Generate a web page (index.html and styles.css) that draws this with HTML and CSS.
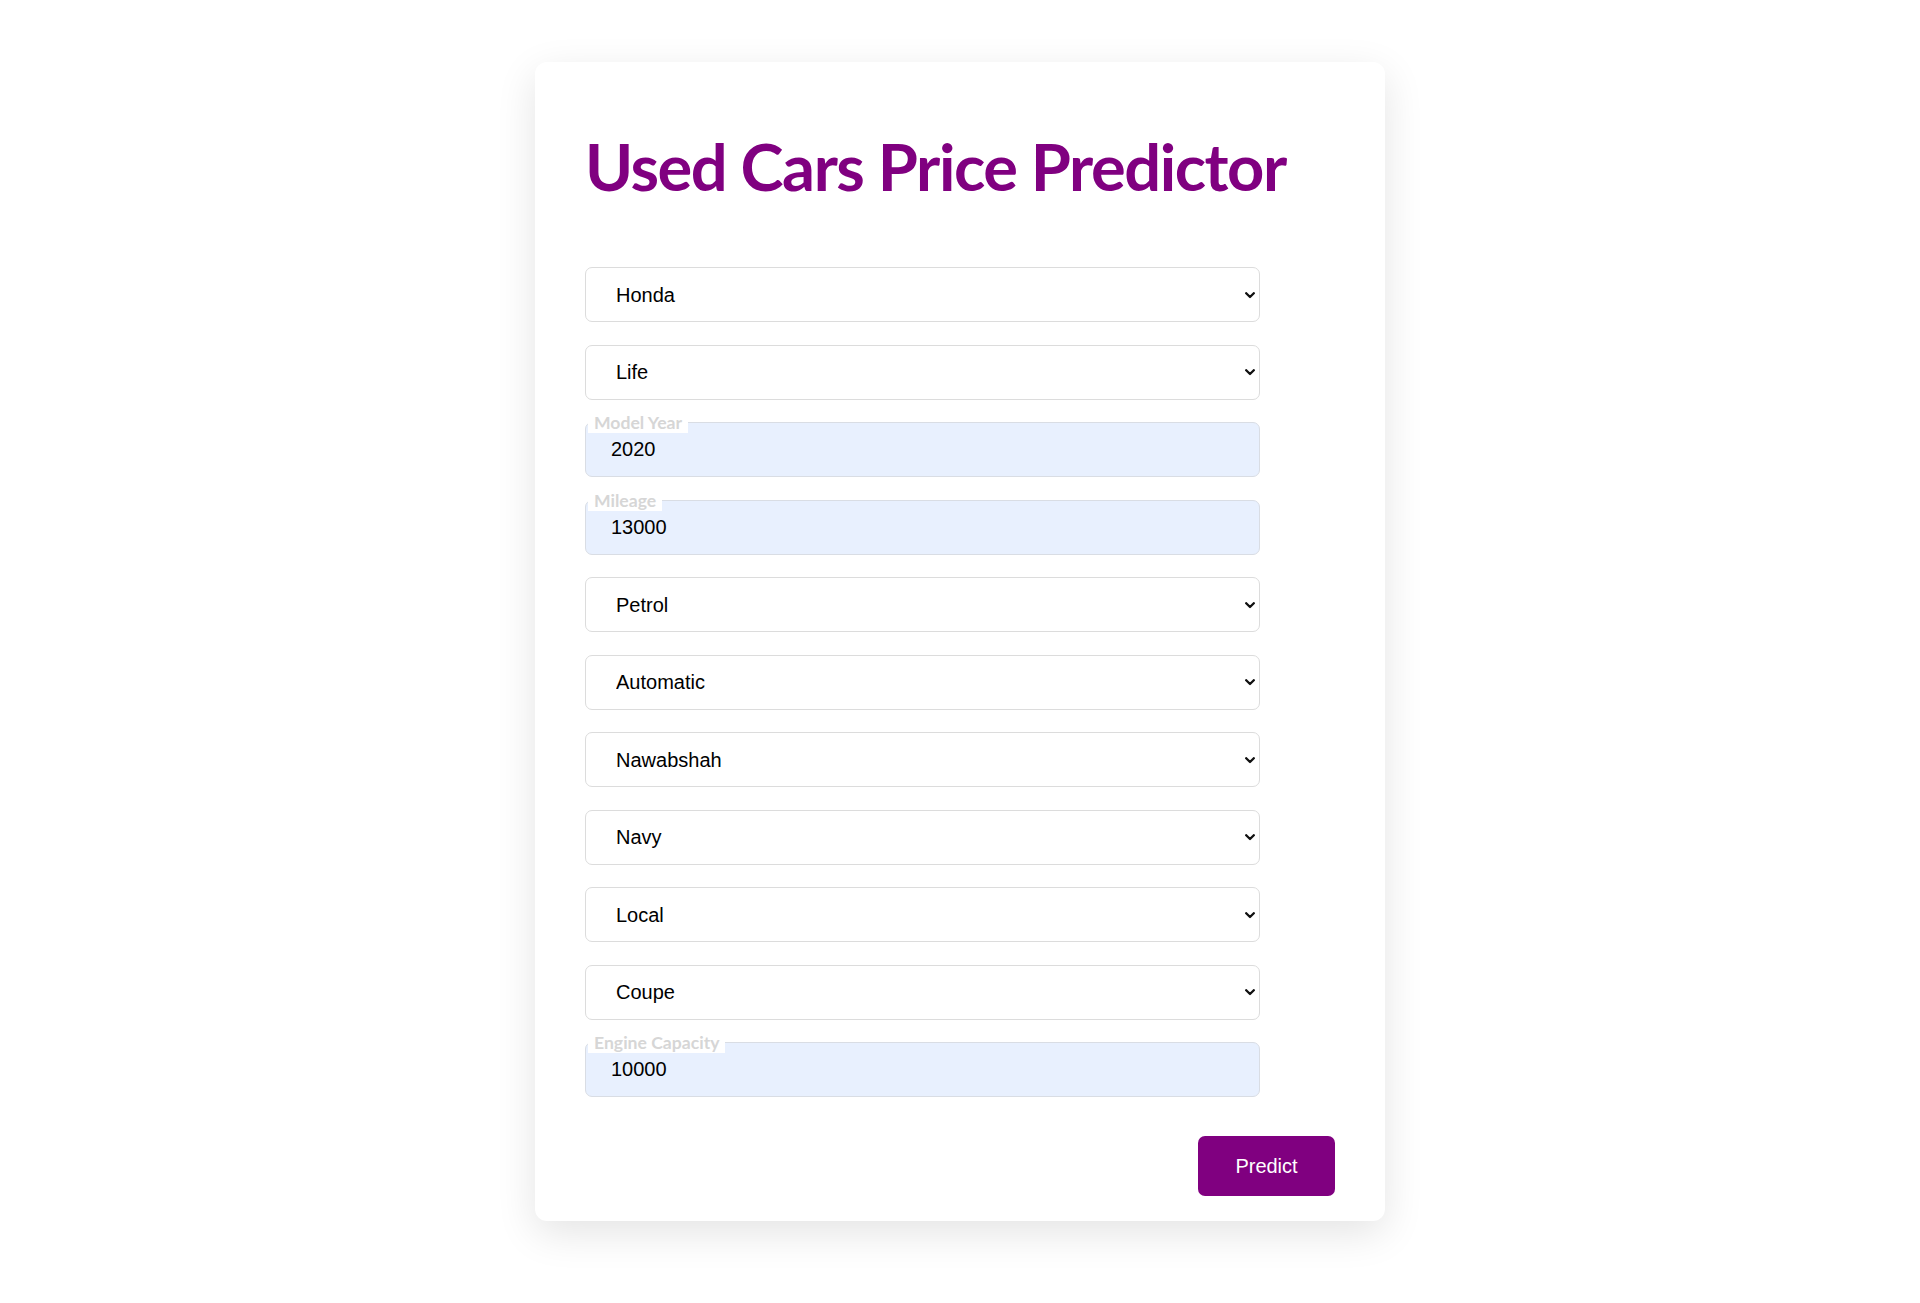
FILE: index.html
```html
<!DOCTYPE html>
<html lang="en">
<head>
<meta charset="utf-8">
<title>Used Cars Price Predictor</title>
<link rel="stylesheet" href="styles.css">
</head>
<body>
<main class="card">
  <h1 class="title">Used Cars Price Predictor</h1>
  <form class="form">
    <div class="sel"><select class="field select"><option>Honda</option></select><svg class="chev" viewBox="0 0 10 7" width="10" height="7"><polyline points="1.2,1.2 5,5 8.8,1.2"/></svg></div>
    <div class="sel"><select class="field select"><option>Life</option></select><svg class="chev" viewBox="0 0 10 7" width="10" height="7"><polyline points="1.2,1.2 5,5 8.8,1.2"/></svg></div>
    <div class="float">
      <label class="float-label">Model Year</label>
      <input class="field input" type="text" value="2020">
    </div>
    <div class="float">
      <label class="float-label">Mileage</label>
      <input class="field input" type="text" value="13000">
    </div>
    <div class="sel"><select class="field select"><option>Petrol</option></select><svg class="chev" viewBox="0 0 10 7" width="10" height="7"><polyline points="1.2,1.2 5,5 8.8,1.2"/></svg></div>
    <div class="sel"><select class="field select"><option>Automatic</option></select><svg class="chev" viewBox="0 0 10 7" width="10" height="7"><polyline points="1.2,1.2 5,5 8.8,1.2"/></svg></div>
    <div class="sel"><select class="field select"><option>Nawabshah</option></select><svg class="chev" viewBox="0 0 10 7" width="10" height="7"><polyline points="1.2,1.2 5,5 8.8,1.2"/></svg></div>
    <div class="sel"><select class="field select"><option>Navy</option></select><svg class="chev" viewBox="0 0 10 7" width="10" height="7"><polyline points="1.2,1.2 5,5 8.8,1.2"/></svg></div>
    <div class="sel"><select class="field select"><option>Local</option></select><svg class="chev" viewBox="0 0 10 7" width="10" height="7"><polyline points="1.2,1.2 5,5 8.8,1.2"/></svg></div>
    <div class="sel"><select class="field select"><option>Coupe</option></select><svg class="chev" viewBox="0 0 10 7" width="10" height="7"><polyline points="1.2,1.2 5,5 8.8,1.2"/></svg></div>
    <div class="float">
      <label class="float-label">Engine Capacity</label>
      <input class="field input" type="text" value="10000">
    </div>
    <div class="actions">
      <button class="btn" type="button">Predict</button>
    </div>
  </form>
</main>
</body>
</html>
```
FILE: styles.css
```css
html, body {
  margin: 0;
  padding: 0;
  background: #ffffff;
}
body {
  padding-top: 62px;
  padding-bottom: 60px;
}
.card {
  box-sizing: border-box;
  width: 850px;
  margin: 0 auto;
  background: #ffffff;
  border-radius: 12px;
  box-shadow: 0 12px 40px rgba(0, 0, 0, 0.11);
  padding: 64px 50px 25px;
}
.title {
  margin: 0;
  font-family: "Lato", "Liberation Sans", sans-serif;
  font-weight: 700;
  font-size: 65px;
  line-height: 80px;
  color: #800080;
  letter-spacing: -1.45px;
  white-space: nowrap;
}
.form {
  display: flex;
  flex-direction: column;
  gap: 22.5px;
  margin-top: 61px;
}
.field {
  box-sizing: border-box;
  width: 100%;
  height: 55px;
  margin: 0;
  border: 1px solid #dcdcdc;
  border-radius: 7px;
  font-family: "Liberation Sans", Arial, sans-serif;
  font-size: 20px;
  color: #000000;
  outline: none;
  display: block;
}
.sel {
  position: relative;
  width: 90%;
}
.select {
  appearance: none;
  -webkit-appearance: none;
  background: #ffffff;
  padding: 0 30px 0 30px;
}
.chev {
  position: absolute;
  right: 5px;
  top: 50%;
  margin-top: -3px;
  fill: none;
  stroke: #111111;
  stroke-width: 2.3;
  stroke-linecap: round;
  stroke-linejoin: round;
  pointer-events: none;
}
.float {
  position: relative;
  width: 90%;
}
.input {
  background: #e8f0fe;
  padding: 0 25px;
  border-color: #d9dde4;
}
.float-label {
  position: absolute;
  top: -9px;
  left: 3px;
  padding: 0 6px;
  background: #ffffff;
  font-family: "Lato", "Liberation Sans", sans-serif;
  font-weight: 700;
  font-size: 17.6px;
  line-height: 20px;
  color: #d6d6d6;
  z-index: 1;
}
.actions {
  display: flex;
  justify-content: flex-end;
  margin-top: 16.5px;
}
.btn {
  width: 137px;
  height: 60px;
  border: none;
  border-radius: 7px;
  background: #800080;
  color: #ffffff;
  font-family: "Liberation Sans", Arial, sans-serif;
  font-size: 20px;
  cursor: pointer;
}
```
